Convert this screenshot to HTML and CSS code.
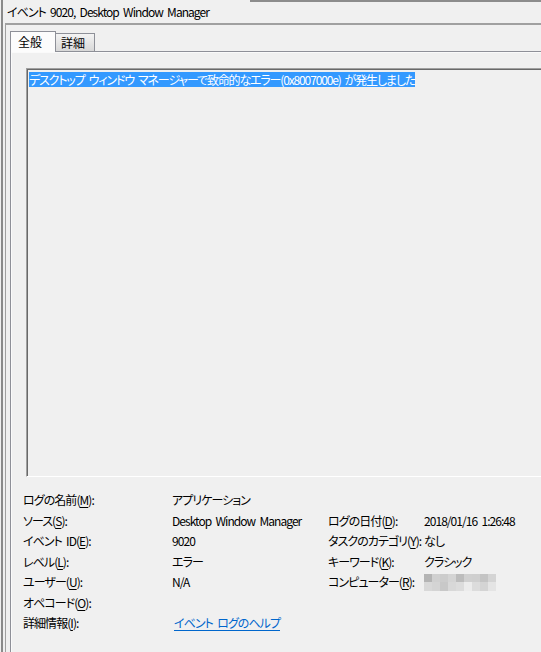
FILE: index.html
```html
<!DOCTYPE html>
<html lang="ja">
<head>
<meta charset="utf-8">
<title>イベント 9020, Desktop Window Manager</title>
<link rel="stylesheet" href="styles.css">
</head>
<body>
<div class="window">
  <div class="main">
    <div class="titlerow">
      <span class="title">イベント 9020, Desktop Window Manager</span>
      <span class="topline"></span>
    </div>
    <div class="panel">
      <div class="tabs">
        <div class="tab active">全般</div>
        <div class="tab">詳細</div>
      </div>
      <div class="page">
        <div class="textbox"><span class="sel">デスクトップ ウィンドウ マネージャーで致命的なエラー(0x8007000e) が発生しました</span></div>
        <div class="info">
          <div>ログの名前(<u>M</u>):</div><div>アプリケーション</div><div></div><div></div>
          <div>ソース(<u>S</u>):</div><div>Desktop Window Manager</div><div>ログの日付(<u>D</u>):</div><div>2018/01/16 1:26:48</div>
          <div>イベント ID(<u>E</u>):</div><div>9020</div><div>タスクのカテゴリ(<u>Y</u>):</div><div>なし</div>
          <div>レベル(<u>L</u>):</div><div>エラー</div><div>キーワード(<u>K</u>):</div><div>クラシック</div>
          <div>ユーザー(<u>U</u>):</div><div>N/A</div><div>コンピューター(<u>R</u>):</div><div class="masked"><svg class="mosaic" width="72" height="17" viewBox="0 0 72 17">
            <rect x="0" y="0" width="8" height="8" fill="#b4b4b4"/>
            <rect x="8" y="0" width="8" height="8" fill="#d0d0d0"/>
            <rect x="16" y="0" width="8" height="8" fill="#cccccc"/>
            <rect x="24" y="0" width="8" height="8" fill="#d4d4d4"/>
            <rect x="32" y="0" width="8" height="8" fill="#bcbcbc"/>
            <rect x="40" y="0" width="8" height="8" fill="#d0d0d0"/>
            <rect x="48" y="0" width="8" height="8" fill="#cfcfcf"/>
            <rect x="56" y="0" width="8" height="8" fill="#c4c4c4"/>
            <rect x="64" y="0" width="8" height="8" fill="#d4d4d4"/>
            <rect x="0" y="8" width="8" height="9" fill="#d8d8d8"/>
            <rect x="8" y="8" width="8" height="9" fill="#d4d4d4"/>
            <rect x="16" y="8" width="8" height="9" fill="#c8c8c8"/>
            <rect x="24" y="8" width="8" height="9" fill="#d8d8d8"/>
            <rect x="32" y="8" width="8" height="9" fill="#dcdcdc"/>
            <rect x="40" y="8" width="8" height="9" fill="#ececec"/>
            <rect x="48" y="8" width="8" height="9" fill="#dcdcdc"/>
            <rect x="56" y="8" width="8" height="9" fill="#d4d4d4"/>
            <rect x="64" y="8" width="8" height="9" fill="#e4e4e4"/>
          </svg></div>
          <div>オペコード(<u>O</u>):</div><div></div><div></div><div></div>
          <div>詳細情報(<u>I</u>):</div><div><a class="link" href="#">イベント ログのヘルプ</a></div><div></div><div></div>
        </div>
      </div>
    </div>
  </div>
</div>
</body>
</html>
```

FILE: styles.css
```css
html, body {
  margin: 0;
  padding: 0;
}

body {
  width: 541px;
  height: 652px;
  overflow: hidden;
  background: #f0f0f0;
  font-family: "Noto Sans CJK JP", "Noto Sans", sans-serif;
  font-size: 12px;
  font-feature-settings: "palt";
  letter-spacing: -0.8px;
  word-spacing: 2.5px;
  color: #000;
  padding-left: 1px;
  box-sizing: border-box;
}

.window {
  display: flex;
  height: 652px;
  border-left: 2px solid #8a8a8a;
}

.main {
  flex: none;
  width: 640px;
  display: flex;
  flex-direction: column;
}

.titlerow {
  height: 23px;
  display: flex;
  align-items: flex-start;
}

.title {
  flex: none;
  width: 243px;
  padding-left: 4px;
  line-height: 23px;
  letter-spacing: -0.95px;
  white-space: nowrap;
}

.topline {
  flex: 1;
  border-top: 2px solid #8c8c8c;
}

.panel {
  flex: 1;
  margin-left: 2px;
  border-top: 2px solid #a0a0a0;
  border-left: 1px solid #a0a0a0;
  display: flex;
  flex-direction: column;
}

.tabs {
  height: 26px;
  padding-left: 4px;
  display: flex;
  align-items: flex-end;
  position: relative;
  z-index: 1;
}

.tab {
  box-sizing: border-box;
  border: 1px solid #8e9098;
  border-bottom: none;
  white-space: nowrap;
  letter-spacing: 0;
}

.tab.active {
  width: 46px;
  height: 21px;
  margin-bottom: -1px;
  padding-left: 7px;
  line-height: 19px;
  background: #fcfcfc;
  position: relative;
  z-index: 2;
}

.tab:not(.active) {
  width: 40px;
  height: 18px;
  margin-left: -1px;
  padding-left: 5px;
  line-height: 17px;
  background: linear-gradient(#f3f3f3, #e6e6e6 50%, #d8d8d8);
}

.page {
  flex: 1;
  margin-left: 4px;
  border-top: 1px solid #8e9098;
  border-left: 1px solid #8e9098;
  box-shadow: inset 1px 1px #fafafa;
  padding: 16px 0 0 15px;
  display: flex;
  flex-direction: column;
}

.textbox {
  flex: none;
  width: 600px;
  height: 409px;
  box-sizing: border-box;
  border-top: 1px solid #a0a0a0;
  border-left: 1px solid #a0a0a0;
  border-bottom: 1px solid #ffffff;
  box-shadow: inset 1px 1px #696969;
  padding: 2px 0 0 2px;
  background: #f0f0f0;
}

.sel {
  display: inline-block;
  height: 15px;
  line-height: 15px;
  letter-spacing: -1.15px;
  background: #3399ff;
  color: #fff;
  white-space: nowrap;
}

.info {
  display: grid;
  grid-template-columns: 149px 156px 96px auto;
  grid-auto-rows: 20.5px;
  margin: 13px 0 0 -3px;
  line-height: 20.5px;
  letter-spacing: -0.95px;
  white-space: nowrap;
}

.info u {
  text-decoration-thickness: 1px;
  text-underline-offset: 2px;
}

.masked {
  display: flex;
  align-items: center;
  padding-top: 1px;
}

.mosaic {
  display: block;
}

.link {
  color: #0066cc;
  text-decoration: underline;
  text-underline-offset: 2px;
  padding-left: 2px;
}
```
